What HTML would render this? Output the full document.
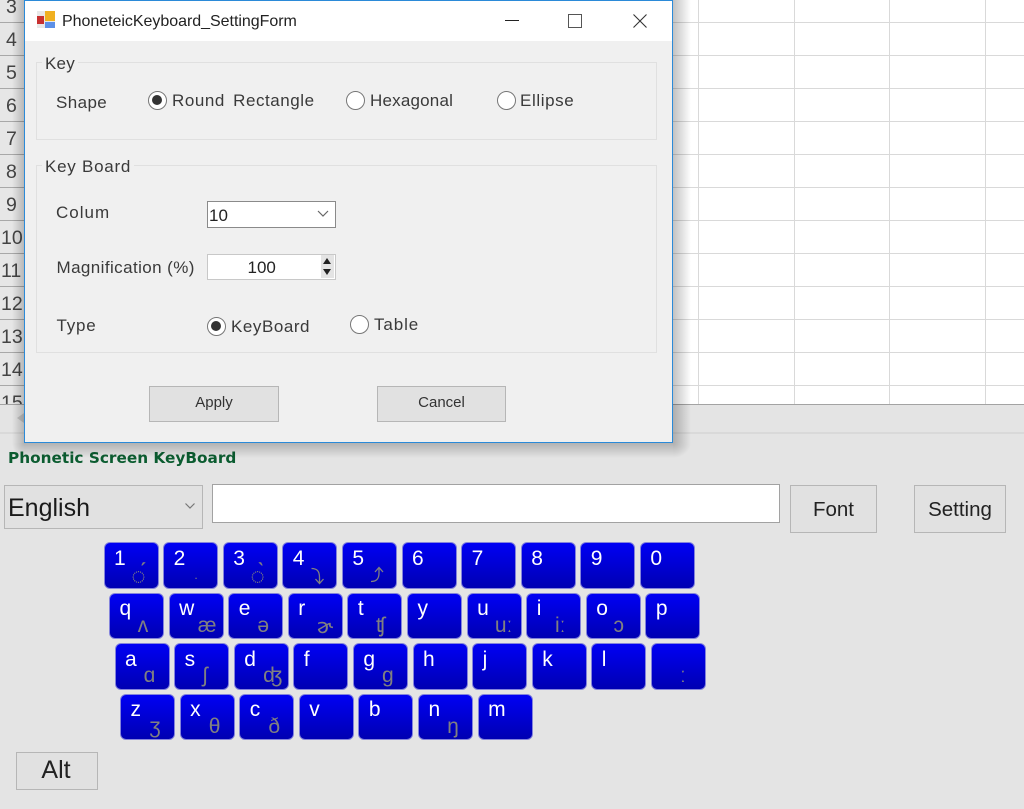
<!DOCTYPE html>
<html><head><meta charset="utf-8">
<style>
html,body{margin:0;padding:0}
body{width:1024px;height:809px;position:relative;overflow:hidden;background:#fff;font-family:"Liberation Sans","DejaVu Sans",sans-serif}
div,span{position:absolute;box-sizing:border-box}
.h{left:673px;width:351px;height:1px;background:#d9d9d9}
.v{top:0;height:404px;width:1px;background:#d9d9d9}
.rn{left:0;width:24px;height:1px;background:#a8a8a8}
.n{font-size:19.5px;line-height:24px;color:#444;white-space:nowrap}
.t{font-size:17px;line-height:20px;color:#3a3a3a;white-space:nowrap}
.gb{border:1px solid #e0e0e0}
.lg{background:#f0f0f0}
.r{width:19px;height:19px;border-radius:50%;border:1.5px solid #777;background:#fff}
.r.c:after{content:"";position:absolute;left:3px;top:3px;width:10px;height:10px;border-radius:50%;background:#333}
.b{background:#e1e1e1;border:1.5px solid #b6b6b6;text-align:center;color:#222;white-space:nowrap}
.k{width:55px;height:46.5px;border-radius:6px;border:1px solid #8484dc;background:linear-gradient(#0000f4,#0000b2)}
.k b{position:absolute;left:9.5px;top:3.5px;font-weight:normal;font-size:21px;line-height:24px;color:#fff}
.k i{position:absolute;top:20px;width:40px;margin-left:-21px;text-align:center;font-style:normal;font-size:21px;line-height:24px;color:#808080;white-space:nowrap}
.k svg{position:absolute}
</style></head><body>
<div style="left:0;top:0;width:24px;height:404px;background:#e6e6e6"></div>
<div class="h" style="top:22px"></div><div class="h" style="top:55px"></div><div class="h" style="top:88px"></div><div class="h" style="top:121px"></div><div class="h" style="top:154px"></div><div class="h" style="top:187px"></div><div class="h" style="top:220px"></div><div class="h" style="top:253px"></div><div class="h" style="top:286px"></div><div class="h" style="top:319px"></div><div class="h" style="top:352px"></div><div class="h" style="top:385px"></div>
<div class="v" style="left:698px"></div><div class="v" style="left:794px"></div><div class="v" style="left:889px"></div><div class="v" style="left:985px"></div>
<div class="rn" style="top:22px"></div><div class="rn" style="top:55px"></div><div class="rn" style="top:88px"></div><div class="rn" style="top:121px"></div><div class="rn" style="top:154px"></div><div class="rn" style="top:187px"></div><div class="rn" style="top:220px"></div><div class="rn" style="top:253px"></div><div class="rn" style="top:286px"></div><div class="rn" style="top:319px"></div><div class="rn" style="top:352px"></div><div class="rn" style="top:385px"></div>
<span class="n" style="left:6px;top:-5px">3</span><span class="n" style="left:6px;top:28px">4</span><span class="n" style="left:6px;top:61px">5</span><span class="n" style="left:6px;top:94px">6</span><span class="n" style="left:6px;top:127px">7</span><span class="n" style="left:6px;top:160px">8</span><span class="n" style="left:6px;top:193px">9</span><span class="n" style="left:1px;top:226px">10</span><span class="n" style="left:1px;top:259px">11</span><span class="n" style="left:1px;top:292px">12</span><span class="n" style="left:1px;top:325px">13</span><span class="n" style="left:1px;top:358px">14</span><span class="n" style="left:1px;top:391px">15</span>

<div style="left:0;top:404px;width:1024px;height:405px;background:#e4e4e4;border-top:1px solid #a3a3a3"></div>
<div style="left:0;top:432px;width:1024px;height:2px;background:#d9d9d9"></div>
<div style="left:17px;top:413px;width:0;height:0;border:5.5px solid transparent;border-right:7px solid #c4c4c4;border-left:0"></div>

<div style="left:8px;top:448px;font:bold 15.3px/20px 'DejaVu Sans',sans-serif;color:#0b5c30;white-space:nowrap">Phonetic Screen KeyBoard</div>

<div class="b" style="left:4px;top:485px;width:199px;height:44px;text-align:left"><span style="left:3px;top:7px;font-size:25px;line-height:30px;color:#1a1a1a">English</span>
<svg style="position:absolute;left:178px;top:15px" width="14" height="10"><path d="M2.5 2.5l4.5 4.5 4.5-4.5" fill="none" stroke="#777" stroke-width="1.2"/></svg></div>
<div style="left:212px;top:484px;width:568px;height:39px;background:#fff;border:1.5px solid #a2a2a2"></div>
<div class="b" style="left:790px;top:485px;width:87px;height:48px;font-size:20.5px;line-height:47px">Font</div>
<div class="b" style="left:914px;top:485px;width:92px;height:48px;font-size:20.5px;line-height:47px">Setting</div>
<div class="b" style="left:16px;top:752px;width:82px;height:38px;font-size:25px;line-height:35px;padding-right:2px">Alt</div>

<!-- keys row 1 -->
<div class="k" style="left:103.5px;top:542px"><b>1</b><i style="left:35px;top:22px;font-size:24px">◌́</i></div>
<div class="k" style="left:163.1px;top:542px"><b>2</b><i style="left:33px;font-size:12px">.</i></div>
<div class="k" style="left:222.7px;top:542px"><b>3</b><i style="left:35px;top:22px;font-size:24px">◌̀</i></div>
<div class="k" style="left:282.3px;top:542px"><b>4</b><svg style="left:27px;top:23px" width="16" height="20"><path d="M1.5 2.5C7 2.500 9.500 5 9.500 11.500V17M5.500 13l4 4.500 4-4.500" fill="none" stroke="#808080" stroke-width="1.3"/></svg></div>
<div class="k" style="left:341.9px;top:542px"><b>5</b><svg style="left:27px;top:23px" width="16" height="20"><path d="M1 15.500C6.500 15.500 9 13 9 7V2M5 6l4-4.500 4 4.500" fill="none" stroke="#808080" stroke-width="1.3"/></svg></div>
<div class="k" style="left:401.5px;top:542px"><b>6</b></div>
<div class="k" style="left:461.1px;top:542px"><b>7</b></div>
<div class="k" style="left:520.7px;top:542px"><b>8</b></div>
<div class="k" style="left:580.3px;top:542px"><b>9</b></div>
<div class="k" style="left:639.9px;top:542px"><b>0</b></div>
<!-- row 2 -->
<div class="k" style="left:109px;top:592.5px"><b>q</b><i style="left:34px">ʌ</i></div>
<div class="k" style="left:168.6px;top:592.5px"><b>w</b><i style="left:38.5px">æ</i></div>
<div class="k" style="left:228.2px;top:592.5px"><b>e</b><i style="left:35px">ə</i></div>
<div class="k" style="left:287.8px;top:592.5px"><b>r</b><i style="left:37px;font-family:'DejaVu Sans';font-size:20px">ɚ</i></div>
<div class="k" style="left:347.4px;top:592.5px"><b>t</b><i style="left:33px">ʧ</i></div>
<div class="k" style="left:407px;top:592.5px"><b>y</b></div>
<div class="k" style="left:466.6px;top:592.5px"><b>u</b><i style="left:37px">uː</i></div>
<div class="k" style="left:526.2px;top:592.5px"><b>i</b><i style="left:34px">iː</i></div>
<div class="k" style="left:585.8px;top:592.5px"><b>o</b><i style="left:33px">ɔ</i></div>
<div class="k" style="left:645.4px;top:592.5px"><b>p</b></div>
<!-- row 3 -->
<div class="k" style="left:114.5px;top:643px"><b>a</b><i style="left:35px">ɑ</i></div>
<div class="k" style="left:174.1px;top:643px"><b>s</b><i style="left:31px">ʃ</i></div>
<div class="k" style="left:233.7px;top:643px"><b>d</b><i style="left:39px">ʤ</i></div>
<div class="k" style="left:293.3px;top:643px"><b>f</b></div>
<div class="k" style="left:352.9px;top:643px"><b>g</b><i style="left:35px">ɡ</i></div>
<div class="k" style="left:412.5px;top:643px"><b>h</b></div>
<div class="k" style="left:472.1px;top:643px"><b>j</b></div>
<div class="k" style="left:531.7px;top:643px"><b>k</b></div>
<div class="k" style="left:591.3px;top:643px"><b>l</b></div>
<div class="k" style="left:650.9px;top:643px"><i style="left:32px">ː</i></div>
<!-- row 4 -->
<div class="k" style="left:120px;top:693.5px"><b>z</b><i style="left:35px">ʒ</i></div>
<div class="k" style="left:179.6px;top:693.5px"><b>x</b><i style="left:35px">θ</i></div>
<div class="k" style="left:239.2px;top:693.5px"><b>c</b><i style="left:35px">ð</i></div>
<div class="k" style="left:298.8px;top:693.5px"><b>v</b></div>
<div class="k" style="left:358.4px;top:693.5px"><b>b</b></div>
<div class="k" style="left:418px;top:693.5px"><b>n</b><i style="left:35px">ŋ</i></div>
<div class="k" style="left:477.6px;top:693.5px"><b>m</b></div>

<!-- dialog shadow -->
<div style="left:673px;top:0;width:18px;height:443px;background:linear-gradient(to right,rgba(0,0,0,.24),rgba(0,0,0,0))"></div>
<div style="left:12px;top:0;width:12px;height:443px;background:linear-gradient(to left,rgba(0,0,0,.2),rgba(0,0,0,0))"></div>
<div style="left:24px;top:443px;width:649px;height:15px;background:linear-gradient(to bottom,rgba(0,0,0,.22),rgba(0,0,0,0))"></div>
<div style="left:673px;top:443px;width:18px;height:15px;background:radial-gradient(ellipse farthest-side at 0 0,rgba(0,0,0,.23),rgba(0,0,0,0))"></div>
<div style="left:12px;top:443px;width:12px;height:15px;background:radial-gradient(ellipse farthest-side at 100% 0,rgba(0,0,0,.21),rgba(0,0,0,0))"></div>

<!-- dialog -->
<div style="left:24px;top:0;width:649px;height:443px;background:#f0f0f0;border:1px solid #2b8ad8">
 <div style="left:0;top:0;width:647px;height:40px;background:#fff"></div>
</div>
<svg style="position:absolute;left:36px;top:10px" width="20" height="19"><rect x="1" y="1" width="18" height="17" fill="#e8e8e8"/><rect x="9" y="1" width="10" height="10" fill="#f0b020"/><rect x="1" y="6" width="7" height="8" fill="#c83030"/><rect x="9" y="12" width="10" height="6" fill="#5c90e8"/></svg>
<span class="t" style="left:62px;top:12px;font-size:16px;letter-spacing:-.03px;color:#222">PhoneteicKeyboard_SettingForm</span>
<div style="left:505px;top:20px;width:14px;height:1px;background:#222"></div>
<div style="left:568px;top:14px;width:14px;height:14px;border:1.5px solid #555"></div>
<svg style="position:absolute;left:632px;top:13px" width="16" height="16"><path d="M1.500 1.500l13 13M14.500 1.500l-13 13" stroke="#333" stroke-width="1.1" fill="none"/></svg>

<div class="gb" style="left:36px;top:62px;width:621px;height:78px"></div>
<span class="t lg" style="left:42px;top:54px;padding:0 3px;letter-spacing:.2px">Key</span>
<span class="t" style="left:56px;top:93px;letter-spacing:.4px">Shape</span>
<div class="r c" style="left:148px;top:90.500px"></div>
<span class="t" style="left:172px;top:91px;letter-spacing:.55px;word-spacing:3px">Round Rectangle</span>
<div class="r" style="left:346px;top:90.500px"></div>
<span class="t" style="left:370px;top:91px;letter-spacing:.2px">Hexagonal</span>
<div class="r" style="left:497px;top:90.500px"></div>
<span class="t" style="left:520px;top:91px;letter-spacing:.6px">Ellipse</span>

<div class="gb" style="left:36px;top:165px;width:621px;height:188px"></div>
<span class="t lg" style="left:42px;top:157px;padding:0 3px;letter-spacing:.75px">Key Board</span>
<span class="t" style="left:56px;top:203px;letter-spacing:1px">Colum</span>
<div style="left:207px;top:201px;width:129px;height:27px;background:#fff;border:1.5px solid #8a8a8a"><span class="t" style="left:1px;top:3.500px;color:#222">10</span>
<svg style="position:absolute;left:108px;top:7px" width="14" height="10"><path d="M2 2l5 5 5-5" fill="none" stroke="#666" stroke-width="1.2"/></svg></div>
<span class="t" style="left:56.500px;top:258px;letter-spacing:.41px">Magnification (%)</span>
<div style="left:207px;top:254px;width:129px;height:26px;background:#fff;border:1.5px solid #c8c8c8"><span class="t" style="left:39.500px;top:2.500px;color:#222">100</span>
<div style="left:113px;top:0;width:13px;height:23px;background:#e4e4e4"></div>
<div style="left:115px;top:3px;width:0;height:0;border:4.500px solid transparent;border-bottom:6px solid #222;border-top:0"></div>
<div style="left:115px;top:14px;width:0;height:0;border:4.500px solid transparent;border-top:6px solid #222;border-bottom:0"></div></div>
<span class="t" style="left:56.500px;top:316px;letter-spacing:.8px">Type</span>
<div class="r c" style="left:207px;top:316.500px"></div>
<span class="t" style="left:231px;top:317px;letter-spacing:.55px">KeyBoard</span>
<div class="r" style="left:350px;top:314.500px"></div>
<span class="t" style="left:374px;top:315px;letter-spacing:.9px">Table</span>

<div class="b" style="left:149px;top:386px;width:130px;height:36px;font-size:15px;line-height:31px;color:#333">Apply</div>
<div class="b" style="left:377px;top:386px;width:129px;height:36px;font-size:15px;line-height:31px;color:#333">Cancel</div>
</body></html>
